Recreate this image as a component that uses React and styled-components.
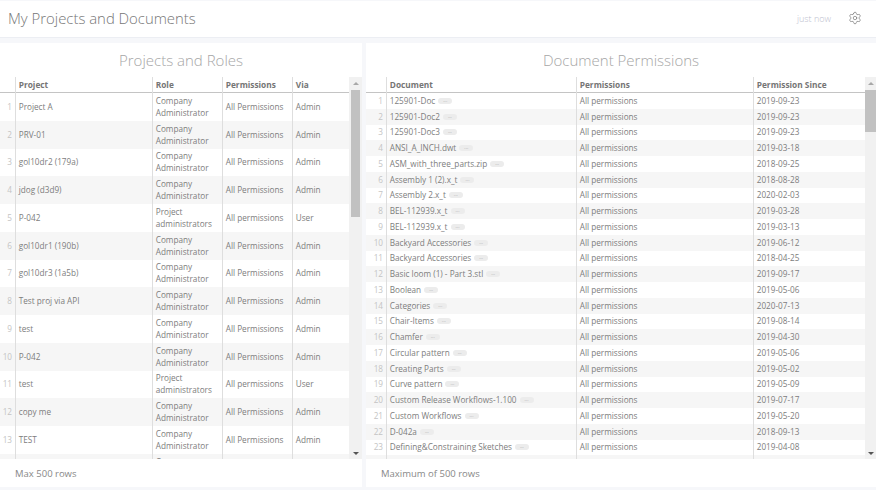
import styled, { createGlobalStyle } from 'styled-components';
import { Settings } from 'lucide-react';

const GlobalStyle = createGlobalStyle`
  html, body {
    margin: 0;
    height: 490px;
    overflow: hidden;
    background: #f6f7fa;
    font-family: 'Open Sans', 'Liberation Sans', sans-serif;
    color: #7d7d7d;
  }
  * { box-sizing: border-box; }
`;

const Page = styled.div`
  width: 876px;
  height: 490px;
  display: flex;
  flex-direction: column;
  padding-top: 1px;
`;

const TopBar = styled.header`
  height: 37px;
  flex: none;
  background: #fff;
  border-bottom: 1px solid #eceef3;
  display: flex;
  align-items: center;
  padding: 0 14px 2px 8px;
`;

const PageTitle = styled.h1`
  flex: 1;
  margin: 0;
  font-size: 14.9px;
  font-weight: 300;
  color: #777;
`;

const Updated = styled.span`
  font-size: 9px;
  font-weight: 300;
  color: #bcc0ce;
  margin-right: 17px;
`;

const Panels = styled.main`
  flex: none;
  display: flex;
  gap: 4px;
  margin-top: 5px;
  height: 444px;
`;

const Panel = styled.section`
  width: ${(p) => p.$width}px;
  background: #fff;
  display: flex;
  flex-direction: column;
`;

const PanelTitle = styled.h2`
  margin: 0;
  height: 34px;
  flex: none;
  font-size: 15px;
  font-weight: 300;
  line-height: 35px;
  text-align: center;
  color: #a6a6a6;
`;

const TableArea = styled.div`
  height: 382px;
  flex: none;
  display: flex;
  overflow: hidden;
`;

const Table = styled.div`
  flex: 1;
  min-width: 0;
  overflow: hidden;
`;

const Row = styled.div`
  display: grid;
  grid-template-columns: ${(p) => p.$columns};
  height: ${(p) => p.$height}px;
  background: ${(p) => (p.$striped ? '#f6f6f6' : '#fff')};
`;

const HeadRow = styled(Row)`
  background: #fff;
  border-bottom: 1px solid #c4c4c4;
`;

const HeadCell = styled.div`
  font-size: 8.3px;
  font-weight: 700;
  line-height: 16px;
  padding-left: 2.75px;
  color: #757575;
  border-right: 1px solid #dedede;
  &:last-child { border-right: 0; }
`;

const Cell = styled.div`
  display: flex;
  align-items: center;
  gap: 3px;
  font-size: 8.2px;
  line-height: 12px;
  padding-left: 2.75px;
  white-space: pre-line;
  border-right: 1px solid #dedede;
  &:last-child { border-right: 0; }
`;

const NumCell = styled(Cell)`
  justify-content: flex-end;
  padding: 0 3px 0 0;
  color: #c4c4c4;
`;

const Badge = styled.span`
  width: 14px;
  height: 6px;
  border-radius: 3px;
  background: #ececec;
  color: #aaa;
  font-size: 5px;
  line-height: 4px;
  text-align: center;
  overflow: hidden;
`;

const ScrollBar = styled.div`
  width: ${(p) => p.$width}px;
  flex: none;
  background: #f1f1f1;
  display: flex;
  flex-direction: column;
  align-items: center;
  padding-top: 13px;
  position: relative;
`;

const Thumb = styled.div`
  width: 100%;
  height: ${(p) => p.$height}px;
  background: #c1c1c1;
  padding: 0 ${(p) => p.$inset}px;
  background-clip: content-box;
`;

const Arrow = styled.span`
  position: absolute;
  ${(p) => (p.$down ? 'bottom: 4px;' : 'top: 5px;')}
  width: 0;
  height: 0;
  border-left: 3px solid transparent;
  border-right: 3px solid transparent;
  ${(p) => (p.$down ? 'border-top: 3px solid #555;' : 'border-bottom: 3px solid #a8a8a8;')}
`;

const Footer = styled.footer`
  height: 28px;
  flex: none;
  display: flex;
  align-items: center;
  padding-left: ${(p) => p.$indent}px;
  font-size: 9.5px;
  color: #888;
`;

const ADMIN = ['Company\nAdministrator', 'All Permissions', 'Admin'];
const USER = ['Project\nadministrators', 'All permissions', 'User'];

const projects = [
  ['Project A', ADMIN],
  ['PRV-01', ADMIN],
  ['gol10dr2 (179a)', ADMIN],
  ['jdog (d3d9)', ADMIN],
  ['P-042', USER],
  ['gol10dr1 (190b)', ADMIN],
  ['gol10dr3 (1a5b)', ADMIN],
  ['Test proj via API', ADMIN],
  ['test', ADMIN],
  ['P-042', ADMIN],
  ['test', USER],
  ['copy me', ADMIN],
  ['TEST', ADMIN],
  ['', ['Company\nAdministrator', '', '']],
];

const documents = [
  ['125901-Doc', '2019-09-23'],
  ['125901-Doc2', '2019-09-23'],
  ['125901-Doc3', '2019-09-23'],
  ['ANSI_A_INCH.dwt', '2019-03-18'],
  ['ASM_with_three_parts.zip', '2018-09-25'],
  ['Assembly 1 (2).x_t', '2018-08-28'],
  ['Assembly 2.x_t', '2020-02-03'],
  ['BEL-112939.x_t', '2019-03-28'],
  ['BEL-112939.x_t', '2019-03-13'],
  ['Backyard Accessories', '2019-06-12'],
  ['Backyard Accessories', '2018-04-25'],
  ['Basic loom (1) - Part 3.stl', '2019-09-17'],
  ['Boolean', '2019-05-06'],
  ['Categories', '2020-07-13'],
  ['Chair-Items', '2019-08-14'],
  ['Chamfer', '2019-04-30'],
  ['Circular pattern', '2019-05-06'],
  ['Creating Parts', '2019-05-02'],
  ['Curve pattern', '2019-05-09'],
  ['Custom Release Workflows-1.100', '2019-07-17'],
  ['Custom Workflows', '2019-05-20'],
  ['D-042a', '2018-09-13'],
  ['Defining&Constraining Sketches', '2019-04-08'],
  ['', ''],
];

const LEFT_COLS = '16px 137px 70px 70px 56px';
const RIGHT_COLS = '21px 190px 177px 111px';

export default function App() {
  return (
    <Page>
      <GlobalStyle />
      <TopBar>
        <PageTitle>My Projects and Documents</PageTitle>
        <Updated>just now</Updated>
        <Settings size={14} strokeWidth={1.2} color="#777" />
      </TopBar>
      <Panels>
        <Panel $width={362}>
          <PanelTitle>Projects and Roles</PanelTitle>
          <TableArea>
            <Table>
              <HeadRow $columns={LEFT_COLS} $height={16}>
                <HeadCell />
                <HeadCell>Project</HeadCell>
                <HeadCell>Role</HeadCell>
                <HeadCell>Permissions</HeadCell>
                <HeadCell>Via</HeadCell>
              </HeadRow>
              {projects.map(([name, [role, perm, via]], i) => (
                <Row key={i} $columns={LEFT_COLS} $height={27.75} $striped={i % 2 === 1}>
                  <NumCell>{name ? i + 1 : ''}</NumCell>
                  <Cell>{name}</Cell>
                  <Cell>{role}</Cell>
                  <Cell>{perm}</Cell>
                  <Cell>{via}</Cell>
                </Row>
              ))}
            </Table>
            <ScrollBar $width={13}>
              <Arrow />
              <Thumb $height={127} $inset={2} />
              <Arrow $down />
            </ScrollBar>
          </TableArea>
          <Footer $indent={15}>Max 500 rows</Footer>
        </Panel>
        <Panel $width={510}>
          <PanelTitle>Document Permissions</PanelTitle>
          <TableArea>
            <Table>
              <HeadRow $columns={RIGHT_COLS} $height={16}>
                <HeadCell />
                <HeadCell>Document</HeadCell>
                <HeadCell>Permissions</HeadCell>
                <HeadCell>Permission Since</HeadCell>
              </HeadRow>
              {documents.map(([name, since], i) => (
                <Row key={i} $columns={RIGHT_COLS} $height={15.75} $striped={i % 2 === 1}>
                  <NumCell>{name ? i + 1 : ''}</NumCell>
                  <Cell>
                    {name}
                    {name && <Badge>...</Badge>}
                  </Cell>
                  <Cell>{name && 'All permissions'}</Cell>
                  <Cell>{since}</Cell>
                </Row>
              ))}
            </Table>
            <ScrollBar $width={11}>
              <Arrow />
              <Thumb $height={42} $inset={0} />
              <Arrow $down />
            </ScrollBar>
          </TableArea>
          <Footer $indent={15}>Maximum of 500 rows</Footer>
        </Panel>
      </Panels>
    </Page>
  );
}
